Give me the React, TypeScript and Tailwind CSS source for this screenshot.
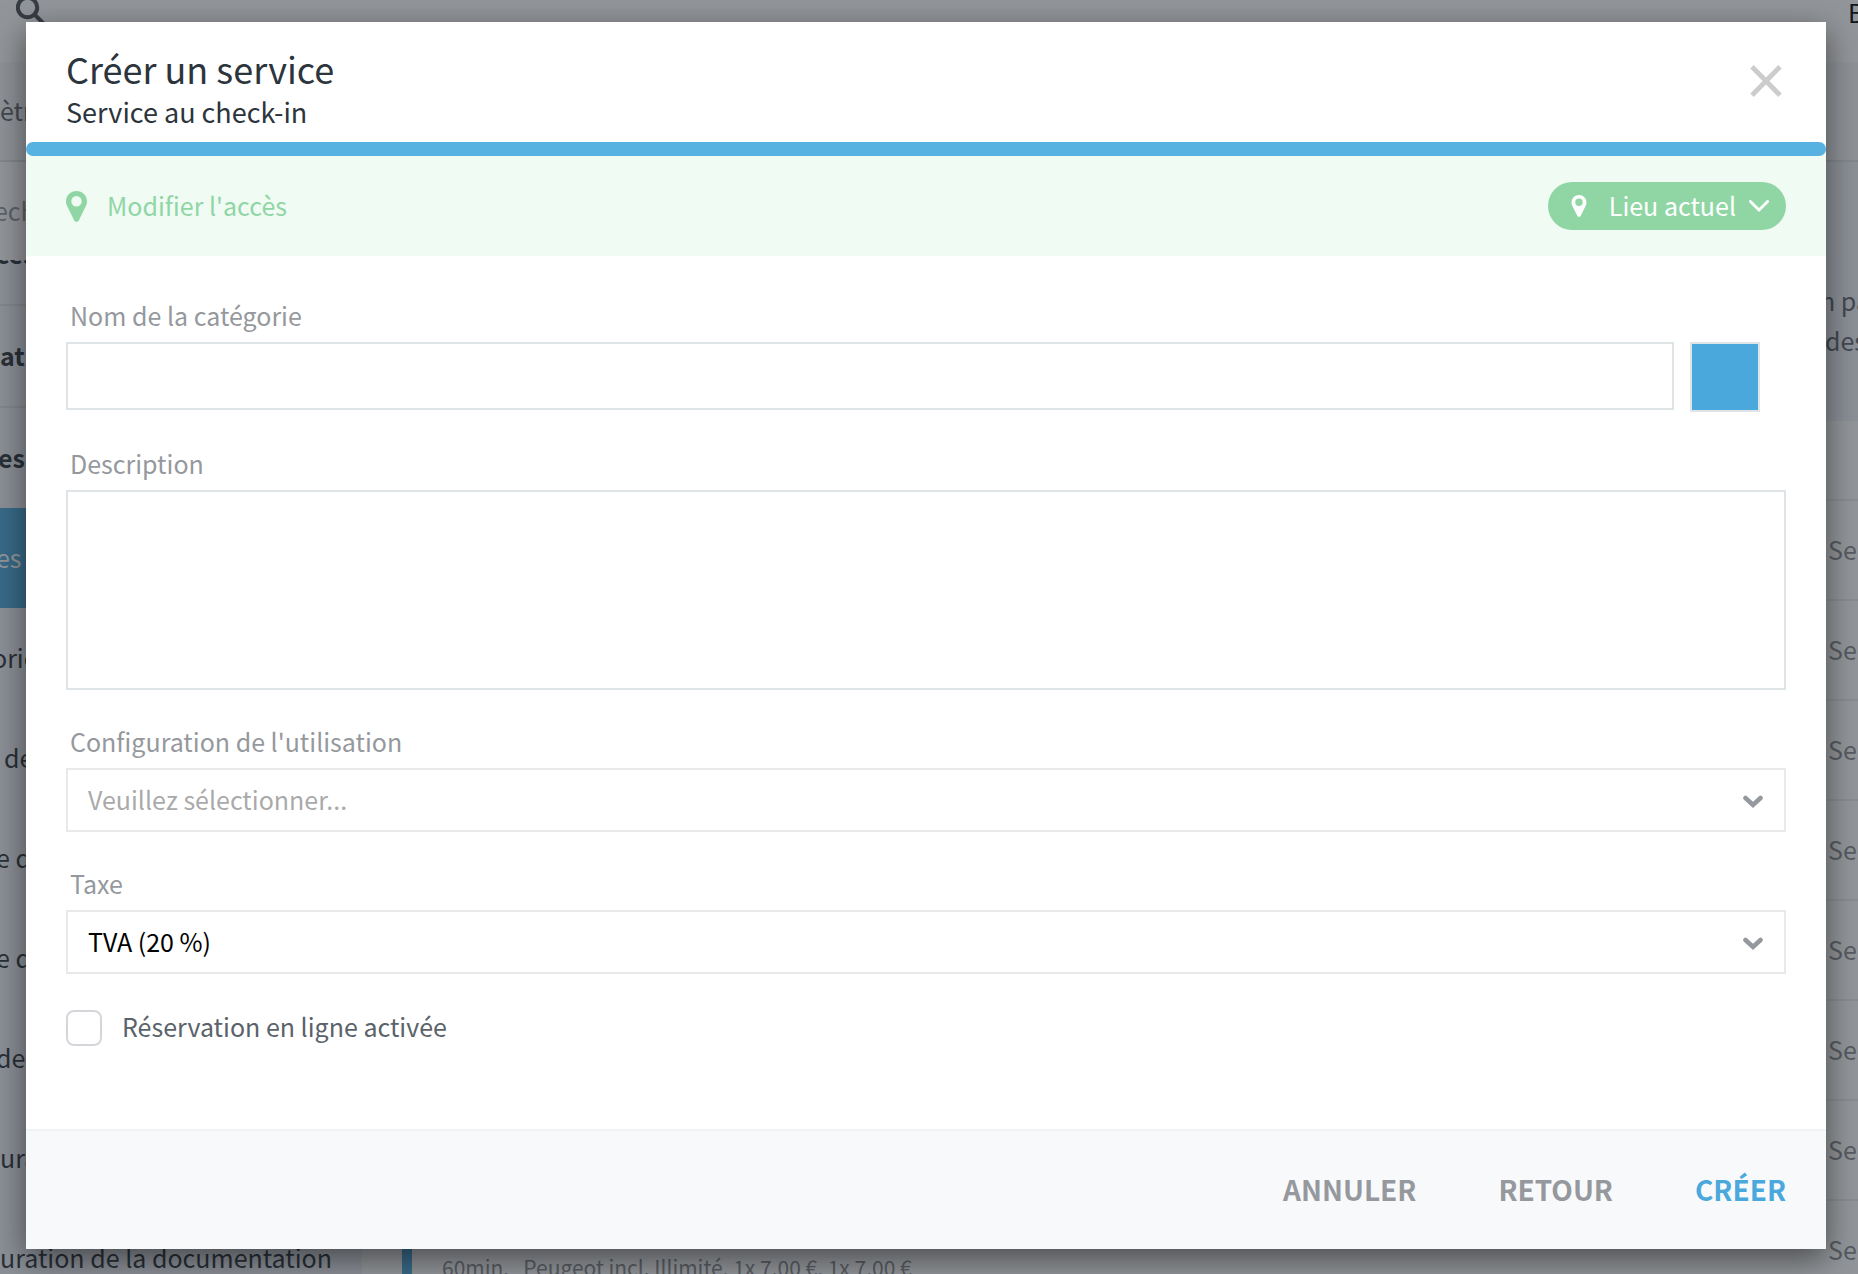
import { useState } from "react";

const sidebarItems = [
  { label: "orie", indent: "-indent-2" },
  { label: "de", indent: "indent-1" },
  { label: "e de", indent: "-indent-1" },
  { label: "e de", indent: "-indent-1" },
  { label: "de", indent: "-indent-1" },
  { label: "ura", indent: "indent-0" },
  { label: "uration de la documentation", indent: "indent-0" },
];

const prices = ["", "", "", "", "", "", "", "60min.   Peugeot incl. Illimité, 1x 7,00 €, 1x 7,00 €"];

const labelClass = "block pl-1 text-[25px] leading-[34px] text-[#95989d]";

function PinIcon({ className }: { className: string }) {
  return (
    <svg viewBox="0 0 21 31" className={className} fill="currentColor" aria-hidden="true">
      <path
        fillRule="evenodd"
        d="M10.5 0C4.6 0 0 4.6 0 10.4c0 1.900.400 3.200 1.100 4.700l7 14.100c.9 2.200 3.900 2.200 4.800 0l7-14.100c.7-1.500 1.100-2.800 1.100-4.700C21 4.600 16.400 0 10.500 0Zm0 15.500a5.200 5.200 0 1 1 0-10.400 5.200 5.200 0 0 1 0 10.400Z"
      />
    </svg>
  );
}

function SelectChevron() {
  return (
    <svg
      viewBox="0 0 20 14"
      className="pointer-events-none absolute right-[23px] top-[27px] h-[14px] w-5"
      fill="none"
      stroke="#95989d"
      strokeWidth="4.600"
      strokeLinecap="round"
      aria-hidden="true"
    >
      <path d="M2.500 3 10 9.900 17.500 3" />
    </svg>
  );
}

// The settings page that sits behind the dialog
function SettingsPage() {
  return (
    <div className="absolute inset-0 flex flex-col overflow-hidden bg-white text-[25px] leading-9 text-[#2c343c]">
      <header className="flex h-[62px] shrink-0 justify-between pl-4">
        <svg viewBox="0 0 30 30" className="-mt-1 h-[30px] w-[30px]" fill="none" stroke="#4a4d52" strokeWidth="4" aria-hidden="true">
          <circle cx="11.500" cy="11.500" r="9.700" />
          <path d="m18.500 18.500 9 9" />
        </svg>
        <span className="-mt-1.5 w-[10px] text-black">B</span>
      </header>
      <div className="flex h-[100px] shrink-0 items-center border-b-2 border-[#dfe3e6] bg-[#f7f8fa] pb-0.5 text-[#5d666e]">ètres</div>
      <div className="flex min-h-0 flex-1">
        <nav className="flex w-[362px] shrink-0 flex-col bg-[#f0f2f8]">
          <div className="flex h-[98px] shrink-0 items-center bg-white pb-0.5 -indent-1.5 text-[#95989d]">ech</div>
          <div className="flex h-[46px] shrink-0 items-start overflow-hidden border-b-2 border-[#dfe3e6] font-bold">
            <span className="-mt-[25px] -indent-1">ces</span>
          </div>
          <div className="flex h-[102px] shrink-0 items-center border-b-2 border-[#dfe3e6] pb-0.5 font-bold">at</div>
          <div className="flex h-[100px] shrink-0 items-center pb-0.5 -indent-0.5 font-bold">es</div>
          <div className="flex h-[100px] shrink-0 items-center bg-[#4ba8dc] pb-0.5 -indent-1 text-white">es</div>
          {sidebarItems.map((item, i) => (
            <div key={i} className={`flex h-[100px] shrink-0 items-center whitespace-nowrap pb-0.5 ${item.indent}`}>
              {item.label}
            </div>
          ))}
        </nav>
        <main className="flex min-w-0 flex-1 flex-col">
          <div className="flex h-[259px] shrink-0 flex-col items-end justify-center bg-[#f0f2f8] pt-14 leading-10 text-[#5d666e]">
            <p className="w-[38px] whitespace-nowrap">n par</p>
            <p className="w-[33px] whitespace-nowrap">des</p>
          </div>
          <div className="flex min-h-0 flex-1 pl-10">
            <div className="w-[10px] shrink-0 bg-[#4ba8dc]" />
            <div className="flex min-w-0 flex-1 flex-col">
              <div className="h-20 shrink-0 border-b-2 border-[#eceef0]" />
              {prices.map((price, i) => (
                <div
                  key={i}
                  className="flex h-[100px] shrink-0 items-center justify-between border-b-2 border-[#eceef0] pb-0.5 pl-[30px] text-[#888c91]"
                >
                  <span className="whitespace-pre pt-9 text-[21px]">{price}</span>
                  <span className="w-[30px]">Ser</span>
                </div>
              ))}
            </div>
          </div>
        </main>
      </div>
    </div>
  );
}

export default function App() {
  const [name, setName] = useState("");
  const [description, setDescription] = useState("");
  const [usage, setUsage] = useState("");
  const [tax, setTax] = useState("tva20");
  const [online, setOnline] = useState(false);

  return (
    <div className="relative min-h-screen overflow-hidden font-['Noto_Sans_CJK_SC',sans-serif]">
      <SettingsPage />
      <div className="absolute inset-0 bg-[#262b33]/50" />

      <div className="relative pb-[25px] pl-[26px] pr-8 pt-[22px]">
        <form
          role="dialog"
          aria-labelledby="dialog-title"
          className="bg-white shadow-[0_10px_30px_rgba(0,0,0,0.5)]"
          onSubmit={(e) => e.preventDefault()}
        >
          <header className="flex h-[120px] items-start justify-between px-10 pt-6">
            <div className="text-[#2c343c]">
              <h1 id="dialog-title" className="text-[36px] leading-[44px]">Créer un service</h1>
              <p className="mt-1 text-[27px] leading-9">Service au check-in</p>
            </div>
            <button type="button" aria-label="Fermer" className="mr-1 mt-[19px] text-[#cccccc]">
              <svg viewBox="0 0 32 32" className="h-8 w-8" fill="none" stroke="currentColor" strokeWidth="4.800">
                <path d="M2 1.800 30 30.200M30 1.800 2 30.200" />
              </svg>
            </button>
          </header>

          <div className="bg-linear-to-b from-white from-50% to-[#f0fbf3] to-50%">
            <div className="h-[14px] rounded-full bg-[#58b2e1]" />
          </div>

          <section className="flex h-[100px] items-center justify-between bg-[#f0fbf3] px-10">
            <div className="flex items-center gap-5 text-[25px] leading-9 text-[#90d6a5]">
              <PinIcon className="h-[31px] w-[21px]" />
              <span className="pb-0.5">Modifier l'accès</span>
            </div>
            <button
              type="button"
              className="flex h-12 items-center rounded-full bg-[#90d6a5] pl-[23px] pr-[17px] text-[25px] leading-9 text-white"
            >
              <PinIcon className="mr-[22px] h-[22px] w-4" />
              <span className="pb-0.5">Lieu actuel</span>
              <svg viewBox="0 0 20 12" className="ml-[13px] h-3 w-5" fill="none" stroke="currentColor" strokeWidth="2.800" strokeLinecap="round" aria-hidden="true">
                <path d="M1.400 1.400 10 10 18.600 1.400" />
              </svg>
            </button>
          </section>

          <div className="px-10 pb-[83px] pt-[42px]">
            <label htmlFor="name" className={labelClass}>Nom de la catégorie</label>
            <div className="mt-[10px] flex items-start gap-4 pr-[26px]">
              <input
                id="name"
                type="text"
                value={name}
                onChange={(e) => setName(e.target.value)}
                className="h-[68px] min-w-0 flex-1 border-2 border-[#dfe4e7] px-5 text-[25px] outline-none"
              />
              <button type="button" aria-label="Couleur" className="h-[70px] w-[70px] border-2 border-[#dfe4e7] bg-[#4ba8dc]" />
            </div>

            <label htmlFor="description" className={`mt-[34px] ${labelClass}`}>Description</label>
            <textarea
              id="description"
              value={description}
              onChange={(e) => setDescription(e.target.value)}
              className="mt-[10px] block h-[200px] w-full resize-none border-2 border-[#dfe4e7] px-5 py-3 text-[25px] outline-none"
            />

            <label htmlFor="usage" className={`mt-[34px] ${labelClass}`}>Configuration de l'utilisation</label>
            <div className="relative mt-[10px]">
              <select
                id="usage"
                value={usage}
                onChange={(e) => setUsage(e.target.value)}
                className="block h-16 w-full appearance-none border-2 border-[#e8e9ea] bg-white px-5 text-[25px] text-[#aaaaaa] outline-none"
              >
                <option value="">Veuillez sélectionner...</option>
              </select>
              <SelectChevron />
            </div>

            <label htmlFor="tax" className={`mt-[34px] ${labelClass}`}>Taxe</label>
            <div className="relative mt-[10px]">
              <select
                id="tax"
                value={tax}
                onChange={(e) => setTax(e.target.value)}
                className="block h-16 w-full appearance-none border-2 border-[#e8e9ea] bg-white px-5 text-[25px] text-black outline-none"
              >
                <option value="tva20">TVA (20 %)</option>
              </select>
              <SelectChevron />
            </div>

            <div className="mt-9 flex items-start gap-5">
              <input
                id="online"
                type="checkbox"
                checked={online}
                onChange={(e) => setOnline(e.target.checked)}
                className="h-9 w-9 appearance-none rounded-lg border-2 border-[#d5d6da] bg-white checked:bg-[#4ba8dc]"
              />
              <label htmlFor="online" className="text-[25px] leading-8 text-[#5a626a]">Réservation en ligne activée</label>
            </div>
          </div>

          <footer className="flex h-[120px] items-center justify-end gap-[82px] border-t-2 border-[#f2f3f5] bg-[#f8f9fb] px-10 pb-0.5 text-[28px] font-bold leading-10 text-[#95989d]">
            <button type="button">ANNULER</button>
            <button type="button">RETOUR</button>
            <button type="submit" className="text-[#4ba8dc]">CRÉER</button>
          </footer>
        </form>
      </div>
    </div>
  );
}
